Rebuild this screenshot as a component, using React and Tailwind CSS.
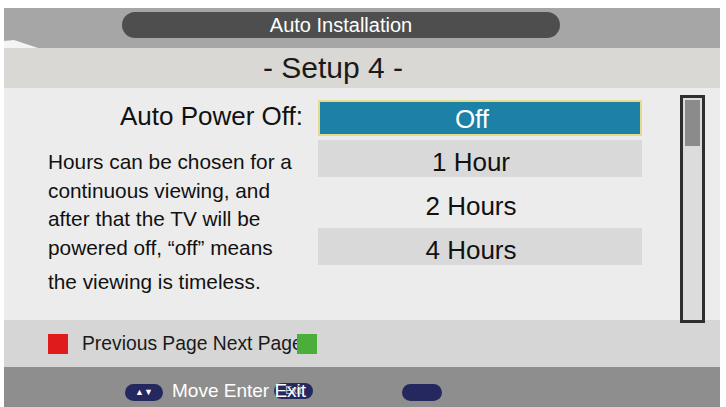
import React from "react";

const font = { fontFamily: '"Liberation Sans", Arial, sans-serif' };

export default function App() {
  return (
    <div className="w-[726px] h-[407px] bg-white overflow-hidden" style={font}>
      <div className="ml-[4px] pt-[8px] w-[716px]">
        {/* Header */}
        <div className="relative h-[40px] bg-[#a6a6a6] pt-[4px]">
          <div className="ml-[118px] w-[438px] h-[26px] rounded-full bg-[#4e4e4e] flex items-center justify-center text-white text-[20px] leading-none">
            Auto Installation
          </div>
          <svg className="absolute left-0 bottom-0" width="34" height="8" viewBox="0 0 34 8">
            <polygon points="0,1 10,0 34,8 0,8" fill="#f4f4f4" />
          </svg>
        </div>
        {/* Sub header */}
        <div className="h-[40px] bg-[#dad8d5] flex items-center">
          <div className="ml-[118px] w-[438px] pr-[16px] text-center text-[30px] leading-none text-[#1a1a1a]">
            - Setup 4 -
          </div>
        </div>
        {/* Main */}
        <div className="h-[232px] bg-[#ececec] flex">
          <div className="w-[314px] pt-[13px]">
            <div className="text-right pr-[15px] text-[26px] leading-[30px] text-[#111]">
              Auto Power Off:
            </div>
            <div className="pl-[44px] mt-[17px] text-[20.8px] leading-[28.5px] text-[#111]">
              <div>Hours can be chosen for a</div>
              <div>continuous viewing, and</div>
              <div>after that the TV will be</div>
              <div>powered off, “off” means</div>
              <div className="mt-[6px]">the viewing is timeless.</div>
            </div>
          </div>
          <div className="w-[324px] pt-[12px] flex flex-col text-[26px] leading-none text-[#111]">
            <div className="h-[36px] bg-[#1d80a6] border-2 border-[#e2dc8c] flex items-center justify-center text-white pt-[1px] pr-[16px]">
              Off
            </div>
            <div className="h-[37px] mt-[4px] bg-[#d9d9d9] flex items-center justify-center pt-[6px] pr-[18px]">
              1 Hour
            </div>
            <div className="h-[37px] mt-[7px] flex items-center justify-center pt-[6px] pr-[18px]">
              2 Hours
            </div>
            <div className="h-[37px] mt-[7px] bg-[#d9d9d9] flex items-center justify-center pt-[6px] pr-[18px]">
              4 Hours
            </div>
          </div>
          <div className="ml-[38px] mt-[7px] relative z-10 w-[25px] h-[228px] border-[3px] border-[#2e2e2e] bg-[#dcdcdc] p-[2px]">
            <div className="w-full h-[46px] bg-[#8b8b8b]" />
          </div>
        </div>
        {/* Footer 1 */}
        <div className="h-[47px] bg-[#d6d6d6] flex items-center">
          <div className="ml-[44px] w-[20px] h-[20px] bg-[#e01b1b]" />
          <div className="ml-[14px] text-[19.3px] leading-none text-[#1a1a1a] whitespace-nowrap">
            Previous Page Next Page
          </div>
          <div className="-ml-[6px] w-[20px] h-[20px] bg-[#4cae3a]" />
        </div>
        {/* Footer 2 */}
        <div className="h-[40px] bg-[#8e8e8e] flex items-center pt-[10px]">
          <div className="ml-[121px] w-[38px] h-[17px] rounded-full bg-[#24285f] flex items-center justify-center text-white text-[9px] leading-none">
            ▲▼
          </div>
          <div className="relative ml-[9px] whitespace-nowrap">
            <div className="absolute left-[102px] top-[3px] w-[39px] h-[16px] rounded-full bg-[#24285f] flex items-center justify-center text-[#c8c8c8] text-[10px] leading-none">
              Exit
            </div>
            <span className="relative text-white text-[19px] leading-none">Move Enter Exit</span>
          </div>
          <div className="ml-[96px] w-[40px] h-[17px] rounded-full bg-[#24285f]" />
        </div>
      </div>
    </div>
  );
}
